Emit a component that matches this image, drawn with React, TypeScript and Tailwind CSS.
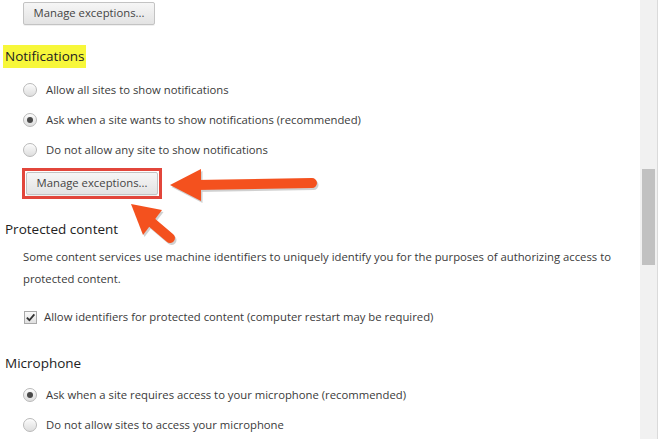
import type { ReactNode } from "react";

function Radio({ checked = false, children }: { checked?: boolean; children: ReactNode }) {
  return (
    <label className="flex h-[30px] items-center pl-[18px]">
      <span className="flex h-[14px] w-[14px] items-center justify-center rounded-full border border-[#b9b9b9] bg-gradient-to-b from-[#fbfbfb] to-[#dedede] shadow-[inset_0_1px_1px_rgba(255,255,255,0.8)]">
        {checked && <span className="h-[6px] w-[6px] rounded-full bg-[#4a4a4a]" />}
      </span>
      <span className="ml-[9px]">{children}</span>
    </label>
  );
}

function Button({ label }: { label: string }) {
  return (
    <button className="flex h-[23px] w-[132px] items-center justify-center rounded-[2px] border border-[#c3c3c3] bg-gradient-to-b from-[#f6f6f6] to-[#e3e3e3] text-[11.3px] text-[#444] shadow-[0_1px_0_rgba(0,0,0,0.06)]">
      {label}
    </button>
  );
}

export default function App() {
  return (
    <div className="flex h-[439px] w-[658px] overflow-hidden bg-white font-['Open_Sans',sans-serif] text-[11.3px] text-[#3a3a3a]">
      <main className="relative flex-1 pl-[5px]">
        <div className="ml-[18px] mt-[2px]">
          <Button label="Manage exceptions..." />
        </div>

        <h2 className="ml-[-2px] mt-[20px] inline-block h-[23px] bg-[#f7f73a] px-[2px] text-[13.5px] leading-[23px] text-[#222]">
          Notifications
        </h2>

        <div className="mt-[7px]">
          <Radio>Allow all sites to show notifications</Radio>
          <Radio checked>Ask when a site wants to show notifications (recommended)</Radio>
          <Radio>Do not allow any site to show notifications</Radio>
        </div>

        <div className="ml-[17px] mt-[3px] inline-block border-[3px] border-[#e2463b] p-px">
          <Button label="Manage exceptions..." />
        </div>

        <h2 className="mt-[20px] h-[20px] text-[13.5px] leading-[20px] text-[#222]">Protected content</h2>
        <p className="ml-[18px] mt-[7px] w-[600px] leading-[22px]">
          Some content services use machine identifiers to uniquely identify you for the purposes of authorizing access to
          protected content.
        </p>

        <label className="ml-[19px] mt-[15px] flex h-[24px] items-center">
          <span className="relative flex h-[13px] w-[13px] items-center justify-center border border-[#a9a9a9] bg-gradient-to-b from-[#fafafa] to-[#e0e0e0]">
            <svg viewBox="0 0 12 12" className="h-[11px] w-[11px]">
              <path d="M2 6.2 L4.8 9 L10.2 2.6" fill="none" stroke="#333" strokeWidth="2" />
            </svg>
          </span>
          <span className="ml-[7px]">Allow identifiers for protected content (computer restart may be required)</span>
        </label>

        <h2 className="mt-[24px] h-[20px] text-[13.5px] leading-[20px] text-[#222]">Microphone</h2>
        <div className="mt-[7px]">
          <Radio checked>Ask when a site requires access to your microphone (recommended)</Radio>
          <Radio>Do not allow sites to access your microphone</Radio>
        </div>

        <svg className="pointer-events-none absolute left-0 top-0" width="640" height="439">
          <g fill="#000" stroke="#000" opacity="0.18" transform="translate(1.5 2)">
            <line x1="195" y1="185" x2="312" y2="183" strokeWidth="10" strokeLinecap="round" />
            <polygon points="170,185 201,169 201,201" stroke="none" />
            <line x1="150" y1="221" x2="170" y2="238" strokeWidth="10" strokeLinecap="round" />
            <polygon points="131,204 162,210 143,235" stroke="none" />
          </g>
          <g fill="#f4511e" stroke="#f4511e">
            <line x1="195" y1="185" x2="312" y2="183" strokeWidth="10" strokeLinecap="round" />
            <polygon points="170,185 201,169 201,201" stroke="none" />
            <line x1="150" y1="221" x2="170" y2="238" strokeWidth="10" strokeLinecap="round" />
            <polygon points="131,204 162,210 143,235" stroke="none" />
          </g>
        </svg>
      </main>

      <aside className="flex w-[18px] justify-center border-r border-[#dadada] bg-[#f1f1f1]">
        <div className="mt-[169px] h-[96px] w-[13px] bg-[#c1c1c1]" />
      </aside>
    </div>
  );
}
